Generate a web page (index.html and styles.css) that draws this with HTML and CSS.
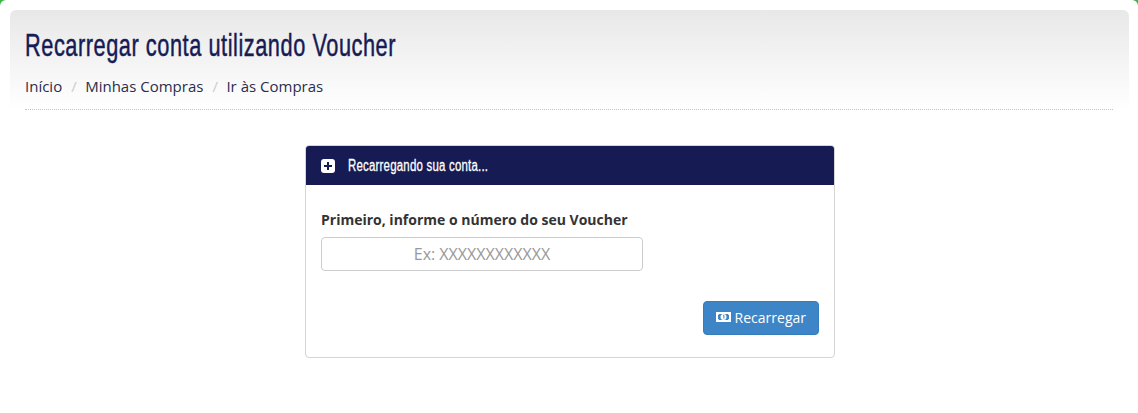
FILE: index.html
```html
<!DOCTYPE html>
<html lang="pt-BR">
<head>
    <meta charset="UTF-8">
    <title>Recarregar conta utilizando Voucher</title>
    <link rel="stylesheet" href="styles.css">
</head>
<body>
    <div class="content">
        <div class="page-header">
            <h1>Recarregar conta utilizando Voucher</h1>
            <ul class="breadcrumb">
                <li><a href="#">Início</a></li>
                <li class="sep">/</li>
                <li><a href="#">Minhas Compras</a></li>
                <li class="sep">/</li>
                <li><a href="#">Ir às Compras</a></li>
            </ul>
            <div class="header-line"></div>
        </div>

        <div class="panel">
            <div class="panel-heading">
                <svg class="icon-plus" width="14" height="14" viewBox="0 0 14 14">
                    <rect width="14" height="14" rx="3" fill="#fff"/>
                    <path d="M7 3v8M3 7h8" stroke="#161b54" stroke-width="2"/>
                </svg>
                <span class="panel-title">Recarregando sua conta...</span>
            </div>
            <form class="panel-body">
                <label for="voucher">Primeiro, informe o número do seu Voucher</label>
                <input id="voucher" type="text" placeholder="Ex: XXXXXXXXXXXX">
                <div class="actions">
                    <button type="button">
                        <svg width="15" height="10" viewBox="0 0 15 10">
                            <path fill-rule="evenodd" fill="#fff" d="M0 0h15v10H0zM3 2a1 1 0 0 1-1 1v4a1 1 0 0 1 1 1h9a1 1 0 0 1 1-1V3a1 1 0 0 1-1-1z"/>
                            <circle cx="7.5" cy="5" r="3" fill="#fff"/>
                            <path d="M7 3.6l.9-.4v3.4" fill="none" stroke="#3d85c6"/>
                        </svg>
                        <span>Recarregar</span>
                    </button>
                </div>
            </form>
        </div>
    </div>
</body>
</html>
```

FILE: styles.css
```css
* {
    box-sizing: border-box;
}
html, body {
    height: 100%;
}
body {
    margin: 0;
    background: #3cb54a;
    font-family: "Open Sans", sans-serif;
    font-size: 14px;
    color: #333;
}
.content {
    min-height: 100%;
    padding: 10px 9px 0 10px;
    background: #fff;
    border-radius: 6px 6px 0 0;
}
.page-header {
    padding: 0 15px;
    height: 100px;
    border-radius: 6px 6px 0 0;
    background: linear-gradient(to bottom, #e8e8e8, #fff);
    position: relative;
}
h1 {
    margin: 0;
    padding-top: 15px;
    font-family: "Liberation Sans", sans-serif;
    font-size: 32px;
    line-height: 40px;
    font-weight: 400;
    letter-spacing: 0.8px;
    color: #161b54;
    white-space: nowrap;
    transform: scaleX(0.68);
    transform-origin: left;
    -webkit-text-stroke: 0.5px #161b54;
}
.breadcrumb {
    display: flex;
    margin: 11px 0 0;
    padding: 0;
    list-style: none;
    font-size: 15px;
    line-height: 20px;
}
.breadcrumb a {
    color: #2b2d4a;
    text-decoration: none;
}
.breadcrumb .sep {
    padding: 0 8.5px 0 9px;
    color: #ccc;
}
.header-line {
    position: absolute;
    left: 15px;
    right: 16px;
    bottom: 0;
    border-bottom: 1px dotted #c4c4c4;
}
.panel {
    width: 530px;
    margin: 35px 0 0 295px;
    border: 1px solid #d5d5d5;
    border-radius: 4px;
    overflow: hidden;
}
.panel-heading {
    display: flex;
    align-items: center;
    gap: 13px;
    height: 39px;
    padding: 0 15px;
    background: #161b54;
    color: #fff;
}
.panel-title {
    font-family: "Liberation Sans", sans-serif;
    font-size: 16px;
    letter-spacing: 0.3px;
    white-space: nowrap;
    transform: scaleX(0.715);
    transform-origin: left;
    -webkit-text-stroke: 0.3px #fff;
}
.panel-body {
    padding: 25px 15px 22px;
}
label {
    display: block;
    font-weight: 700;
    font-size: 14px;
    line-height: 20px;
    color: #333;
}
input {
    display: block;
    width: 322px;
    height: 34px;
    margin-top: 7px;
    border: 1px solid #ccc;
    border-radius: 4px;
    font-family: inherit;
    font-size: 16px;
    text-align: center;
}
input::placeholder {
    color: #999;
}
.actions {
    display: flex;
    justify-content: flex-end;
    margin-top: 30px;
}
button {
    display: flex;
    align-items: center;
    gap: 4px;
    height: 34px;
    padding: 0 12px 2px 12px;
    background: #3d85c6;
    border: 1px solid #357ebd;
    border-radius: 4px;
    color: #fff;
    font-family: inherit;
    font-size: 14px;
}
```
